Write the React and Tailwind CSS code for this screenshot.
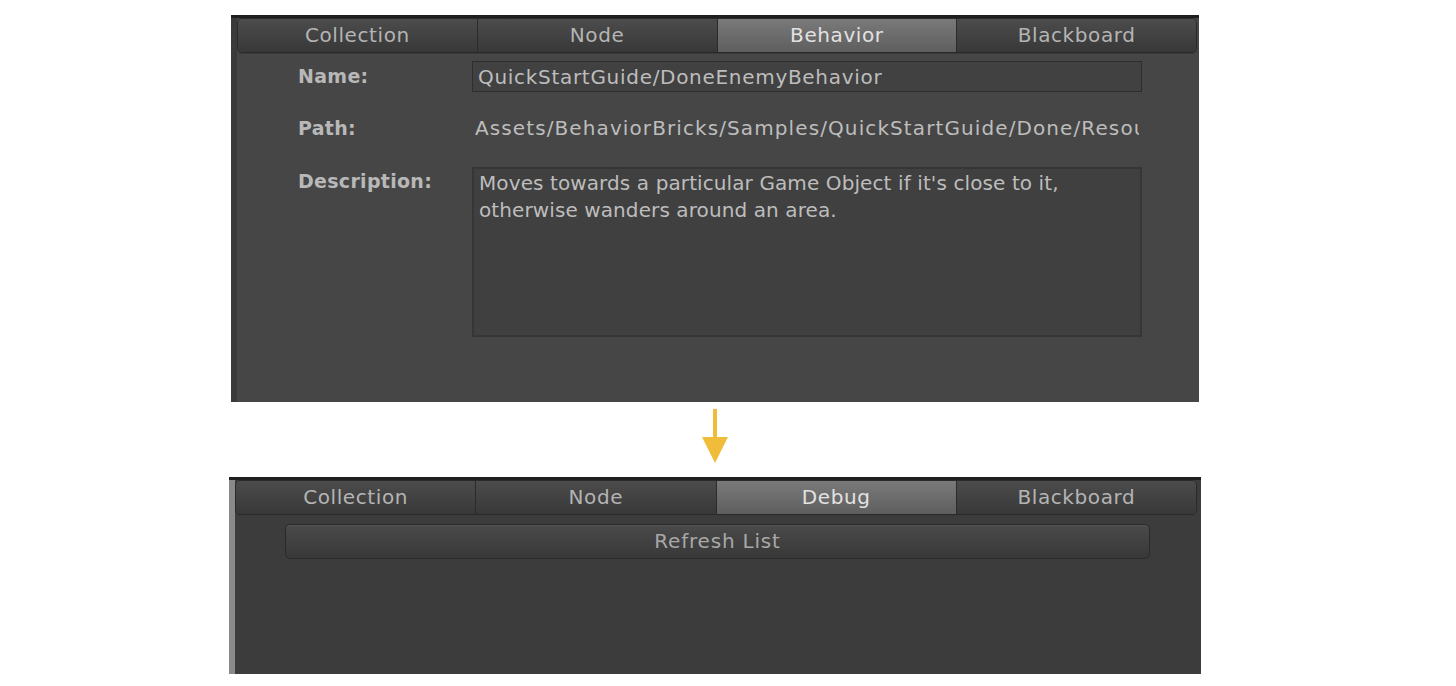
const font = { fontFamily: '"DejaVu Sans", "Liberation Sans", sans-serif' };

function Tabs({ active, labels }) {
  return (
    <div className="flex h-[35px] overflow-hidden rounded-[5px] border border-[#2a2a2a] shadow-[0_1px_0_#3a3a3a]">
      {labels.map((label, i) => (
        <div
          key={label}
          className={`flex flex-1 items-center justify-center pb-[2px] text-[20px] tracking-[0.6px] ${i > 0 ? 'border-l border-[#2b2b2b]' : ''} ${
            label === active
              ? 'bg-gradient-to-b from-[#7a7a7a] to-[#5e5e5e] text-[#e2e2e2]'
              : 'bg-gradient-to-b from-[#4c4c4c] to-[#383838] text-[#b4b4b4]'
          }`}
        >
          {label}
        </div>
      ))}
    </div>
  );
}

function Field({ label, children, className = '' }) {
  return (
    <div className={`flex ${className}`}>
      <div className="w-[235px] shrink-0 pl-[61px] text-[19px] font-bold tracking-[0.3px] text-[#b8b8b8]">{label}</div>
      {children}
    </div>
  );
}

export default function App() {
  return (
    <div className="h-[686px] w-[1456px] bg-white" style={font}>
      <div className="flex flex-col items-start pt-[15px]">
        {/* Behavior panel */}
        <div className="ml-[231px] h-[387px] w-[968px] border-t-[3px] border-[#1f1f1f] bg-[#464646]">
          <div className="flex h-full">
            <div className="w-[6px] bg-[#3a3a3a]" />
            <div className="flex-1 pr-[2px]">
              <Tabs active="Behavior" labels={['Collection', 'Node', 'Behavior', 'Blackboard']} />
              <Field label="Name:" className="mt-[8px] items-center">
                <div className="flex h-[31px] w-[670px] items-center border border-[#2e2e2e] bg-[#414141] pl-[5px] text-[20px] tracking-[0.7px] text-[#bdbdbd]">
                  QuickStartGuide/DoneEnemyBehavior
                </div>
              </Field>
              <Field label="Path:" className="mt-[21px] items-center">
                <div className="w-[667px] overflow-hidden whitespace-nowrap pl-[3px] text-[20px] tracking-[1.1px] text-[#bdbdbd]">
                  Assets/BehaviorBricks/Samples/QuickStartGuide/Done/Resources
                </div>
              </Field>
              <Field label="Description:" className="mt-[24px]">
                <div className="h-[170px] w-[670px] border-2 border-[#363636] bg-[#404040] px-[5px] pt-[1px] text-[20px] leading-[27px] tracking-[0.1px] text-[#bdbdbd]">
                  Moves towards a particular Game Object if it's close to it,
                  <br />
                  otherwise wanders around an area.
                </div>
              </Field>
            </div>
          </div>
        </div>

        {/* arrow */}
        <div className="ml-[702px] flex h-[75px] w-[26px] flex-col items-center pt-[7px]">
          <div className="h-[28px] w-[4px] bg-[#f0bd3a]" />
          <div className="h-0 w-0 border-x-[13px] border-t-[26px] border-x-transparent border-t-[#f0bd3a]" />
        </div>

        {/* Debug panel */}
        <div className="ml-[229px] h-[197px] w-[972px] border-t-[3px] border-[#1f1f1f] bg-[#3c3c3c]">
          <div className="flex h-full">
            <div className="w-[6px] bg-[#8a8a8a]" />
            <div className="flex-1 pr-[4px]">
              <Tabs active="Debug" labels={['Collection', 'Node', 'Debug', 'Blackboard']} />
              <div className="ml-[50px] mt-[9px] flex h-[35px] w-[865px] items-center justify-center rounded-[5px] border border-[#2a2a2a] bg-gradient-to-b from-[#4a4a4a] to-[#383838] pb-[2px] text-[20px] tracking-[0.8px] text-[#a8a8a8] shadow-[inset_0_1px_0_#555]">
                Refresh List
              </div>
            </div>
          </div>
        </div>
      </div>
    </div>
  );
}
